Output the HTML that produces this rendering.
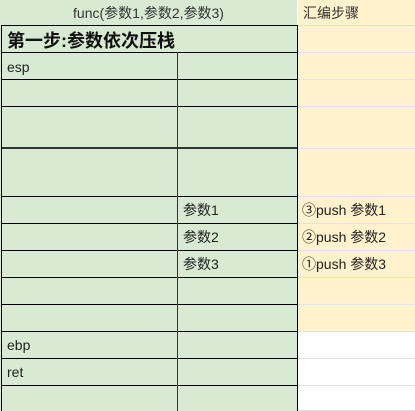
<!DOCTYPE html>
<html><head><meta charset="utf-8"><style>
body{margin:0;width:415px;height:411px;overflow:hidden;background:#fff;position:relative;font-family:"Liberation Sans","Noto Sans CJK SC",sans-serif;font-size:14px;color:#222}
div{position:absolute;box-sizing:border-box}
.g{background:#d9ead3}
.y{background:#fff2cc}
.hl{height:1px;background:#000}
.rl{height:1px;background:#dde3ee;left:298px;width:117px}
.t{line-height:17px;white-space:nowrap}
</style></head><body>
<div class="g" style="left:0;top:0;width:297px;height:411px"></div>
<div class="y" style="left:298px;top:0;width:117px;height:331px"></div>
<div class="t" style="left:0;width:297px;top:5px;text-align:center;color:#333">func(参数1,参数2,参数3)</div>
<div class="t" style="left:303px;top:5px;color:#333">汇编步骤</div>
<div class="t" style="left:7px;top:30px;font-size:18px;font-weight:bold;color:#111;line-height:22px">第一步:参数依次压栈</div>
<div class="hl" style="left:1px;width:296px;top:25px"></div>
<div class="hl" style="left:1px;width:296px;top:52px"></div>
<div class="hl" style="left:1px;width:296px;top:79px"></div>
<div class="hl" style="left:1px;width:296px;top:106px"></div>
<div class="hl" style="left:1px;width:296px;top:147px;height:2px;background:#333"></div>
<div class="hl" style="left:1px;width:296px;top:196px"></div>
<div class="hl" style="left:1px;width:296px;top:223px"></div>
<div class="hl" style="left:1px;width:296px;top:250px"></div>
<div class="hl" style="left:1px;width:296px;top:277px"></div>
<div class="hl" style="left:1px;width:296px;top:304px"></div>
<div class="hl" style="left:1px;width:296px;top:331px"></div>
<div class="hl" style="left:1px;width:296px;top:358px"></div>
<div class="hl" style="left:1px;width:296px;top:385px"></div>
<div style="left:1px;top:25px;width:1px;height:386px;background:#000"></div>
<div style="left:177px;top:52px;width:1px;height:359px;background:#333"></div>
<div style="left:297px;top:25px;width:1px;height:386px;background:#000"></div>
<div class="rl" style="top:25px"></div>
<div class="rl" style="top:52px"></div>
<div class="rl" style="top:79px"></div>
<div class="rl" style="top:106px"></div>
<div class="rl" style="top:148px"></div>
<div class="rl" style="top:196px"></div>
<div class="rl" style="top:223px"></div>
<div class="rl" style="top:250px"></div>
<div class="rl" style="top:277px"></div>
<div class="rl" style="top:304px"></div>
<div class="rl" style="top:331px;background:#e3e3e3"></div>
<div class="rl" style="top:358px;background:#e3e3e3"></div>
<div class="rl" style="top:385px;background:#e3e3e3"></div>
<div class="rl" style="top:410px;background:#cfdcf5"></div>
<div class="t" style="left:7px;top:59px">esp</div>
<div class="t" style="left:183px;top:202px">参数1</div>
<div class="t" style="left:183px;top:229px">参数2</div>
<div class="t" style="left:183px;top:256px">参数3</div>
<div class="t" style="left:302px;top:202px">③push 参数1</div>
<div class="t" style="left:302px;top:229px">②push 参数2</div>
<div class="t" style="left:302px;top:256px">①push 参数3</div>
<div class="t" style="left:7px;top:337px">ebp</div>
<div class="t" style="left:7px;top:364px">ret</div>
</body></html>
